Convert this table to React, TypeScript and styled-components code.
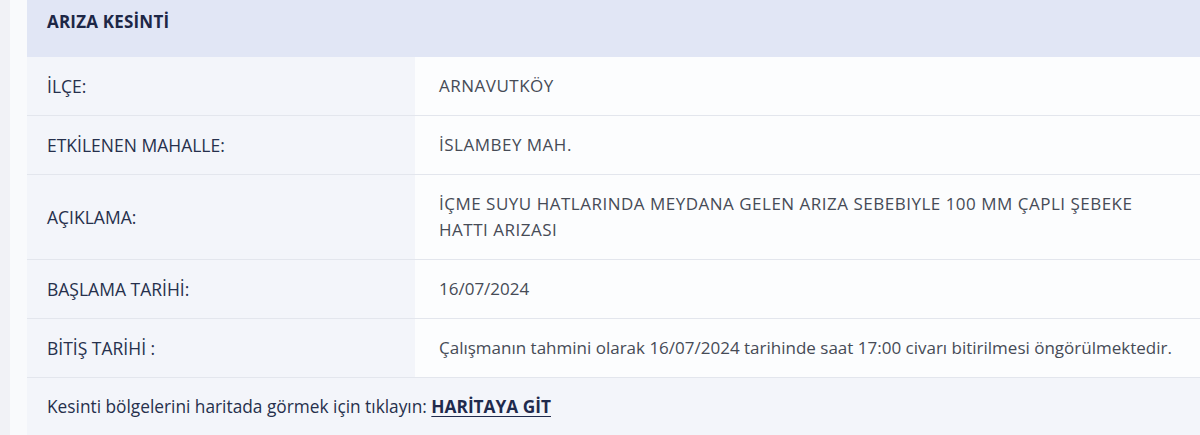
import React from 'react';
import styled, { createGlobalStyle } from 'styled-components';

const GlobalStyle = createGlobalStyle`
  html, body {
    margin: 0;
    padding: 0;
    background-color: #f9fafc;
  }
  body {
    font-family: "Open Sans", "Noto Sans", "Liberation Sans", sans-serif;
    -webkit-font-smoothing: antialiased;
  }
`;

const Shell = styled.div`
  width: 1200px;
  height: 435px;
  box-sizing: border-box;
  overflow: hidden;
  border-left: 10px solid #f1f2f6;
  padding-left: 17px;
  background-color: #f9fafc;
`;

const Table = styled.div`
  display: flex;
  flex-direction: column;
`;

const Header = styled.div`
  background-color: #e1e6f5;
  padding: 9px 20px 22px;
  line-height: 26px;
  font-size: 17px;
  font-weight: 700;
  color: #1d2746;
  letter-spacing: 0.2px;
`;

const Row = styled.div`
  display: grid;
  grid-template-columns: 388px 1fr;
  border-bottom: 1px solid #e3e6ed;
`;

const Label = styled.div`
  background-color: #f3f5fa;
  padding: 16px 20px;
  line-height: 26px;
  font-size: 17.5px;
  font-weight: 500;
  color: #26304c;
  display: flex;
  align-items: center;
`;

const Value = styled.div<{ $caps?: boolean }>`
  background-color: #fcfdfe;
  padding: 16px 20px 16px 24px;
  line-height: 26px;
  font-size: 17px;
  color: #464b56;
  letter-spacing: ${(p) => (p.$caps ? '0.5px' : '0')};
  display: flex;
  align-items: center;
`;

const Footer = styled.div`
  background-color: #f3f5fa;
  padding: 16px 20px;
  line-height: 26px;
  font-size: 17.3px;
  font-weight: 500;
  color: #26304c;
`;

const MapLink = styled.a`
  color: #1f2a4d;
  font-weight: 700;
  text-decoration: underline;
  text-underline-offset: 3px;
  cursor: pointer;
`;

const rows: { label: string; value: string; caps?: boolean }[] = [
  { label: 'İLÇE:', value: 'ARNAVUTKÖY', caps: true },
  { label: 'ETKİLENEN MAHALLE:', value: 'İSLAMBEY MAH.', caps: true },
  {
    label: 'AÇIKLAMA:',
    value: 'İÇME SUYU HATLARINDA MEYDANA GELEN ARIZA SEBEBIYLE 100 MM ÇAPLI ŞEBEKE HATTI ARIZASI',
    caps: true,
  },
  { label: 'BAŞLAMA TARİHİ:', value: '16/07/2024' },
  {
    label: 'BİTİŞ TARİHİ :',
    value: 'Çalışmanın tahmini olarak 16/07/2024 tarihinde saat 17:00 civarı bitirilmesi öngörülmektedir.',
  },
];

const App: React.FC = () => {
  return (
    <>
      <GlobalStyle />
      <Shell>
        <Table>
          <Header>ARIZA KESİNTİ</Header>
          {rows.map((row) => (
            <Row key={row.label}>
              <Label>{row.label}</Label>
              <Value $caps={row.caps}>{row.value}</Value>
            </Row>
          ))}
          <Footer>
            Kesinti bölgelerini haritada görmek için tıklayın: <MapLink>HARİTAYA GİT</MapLink>
          </Footer>
        </Table>
      </Shell>
    </>
  );
};

export default App;
